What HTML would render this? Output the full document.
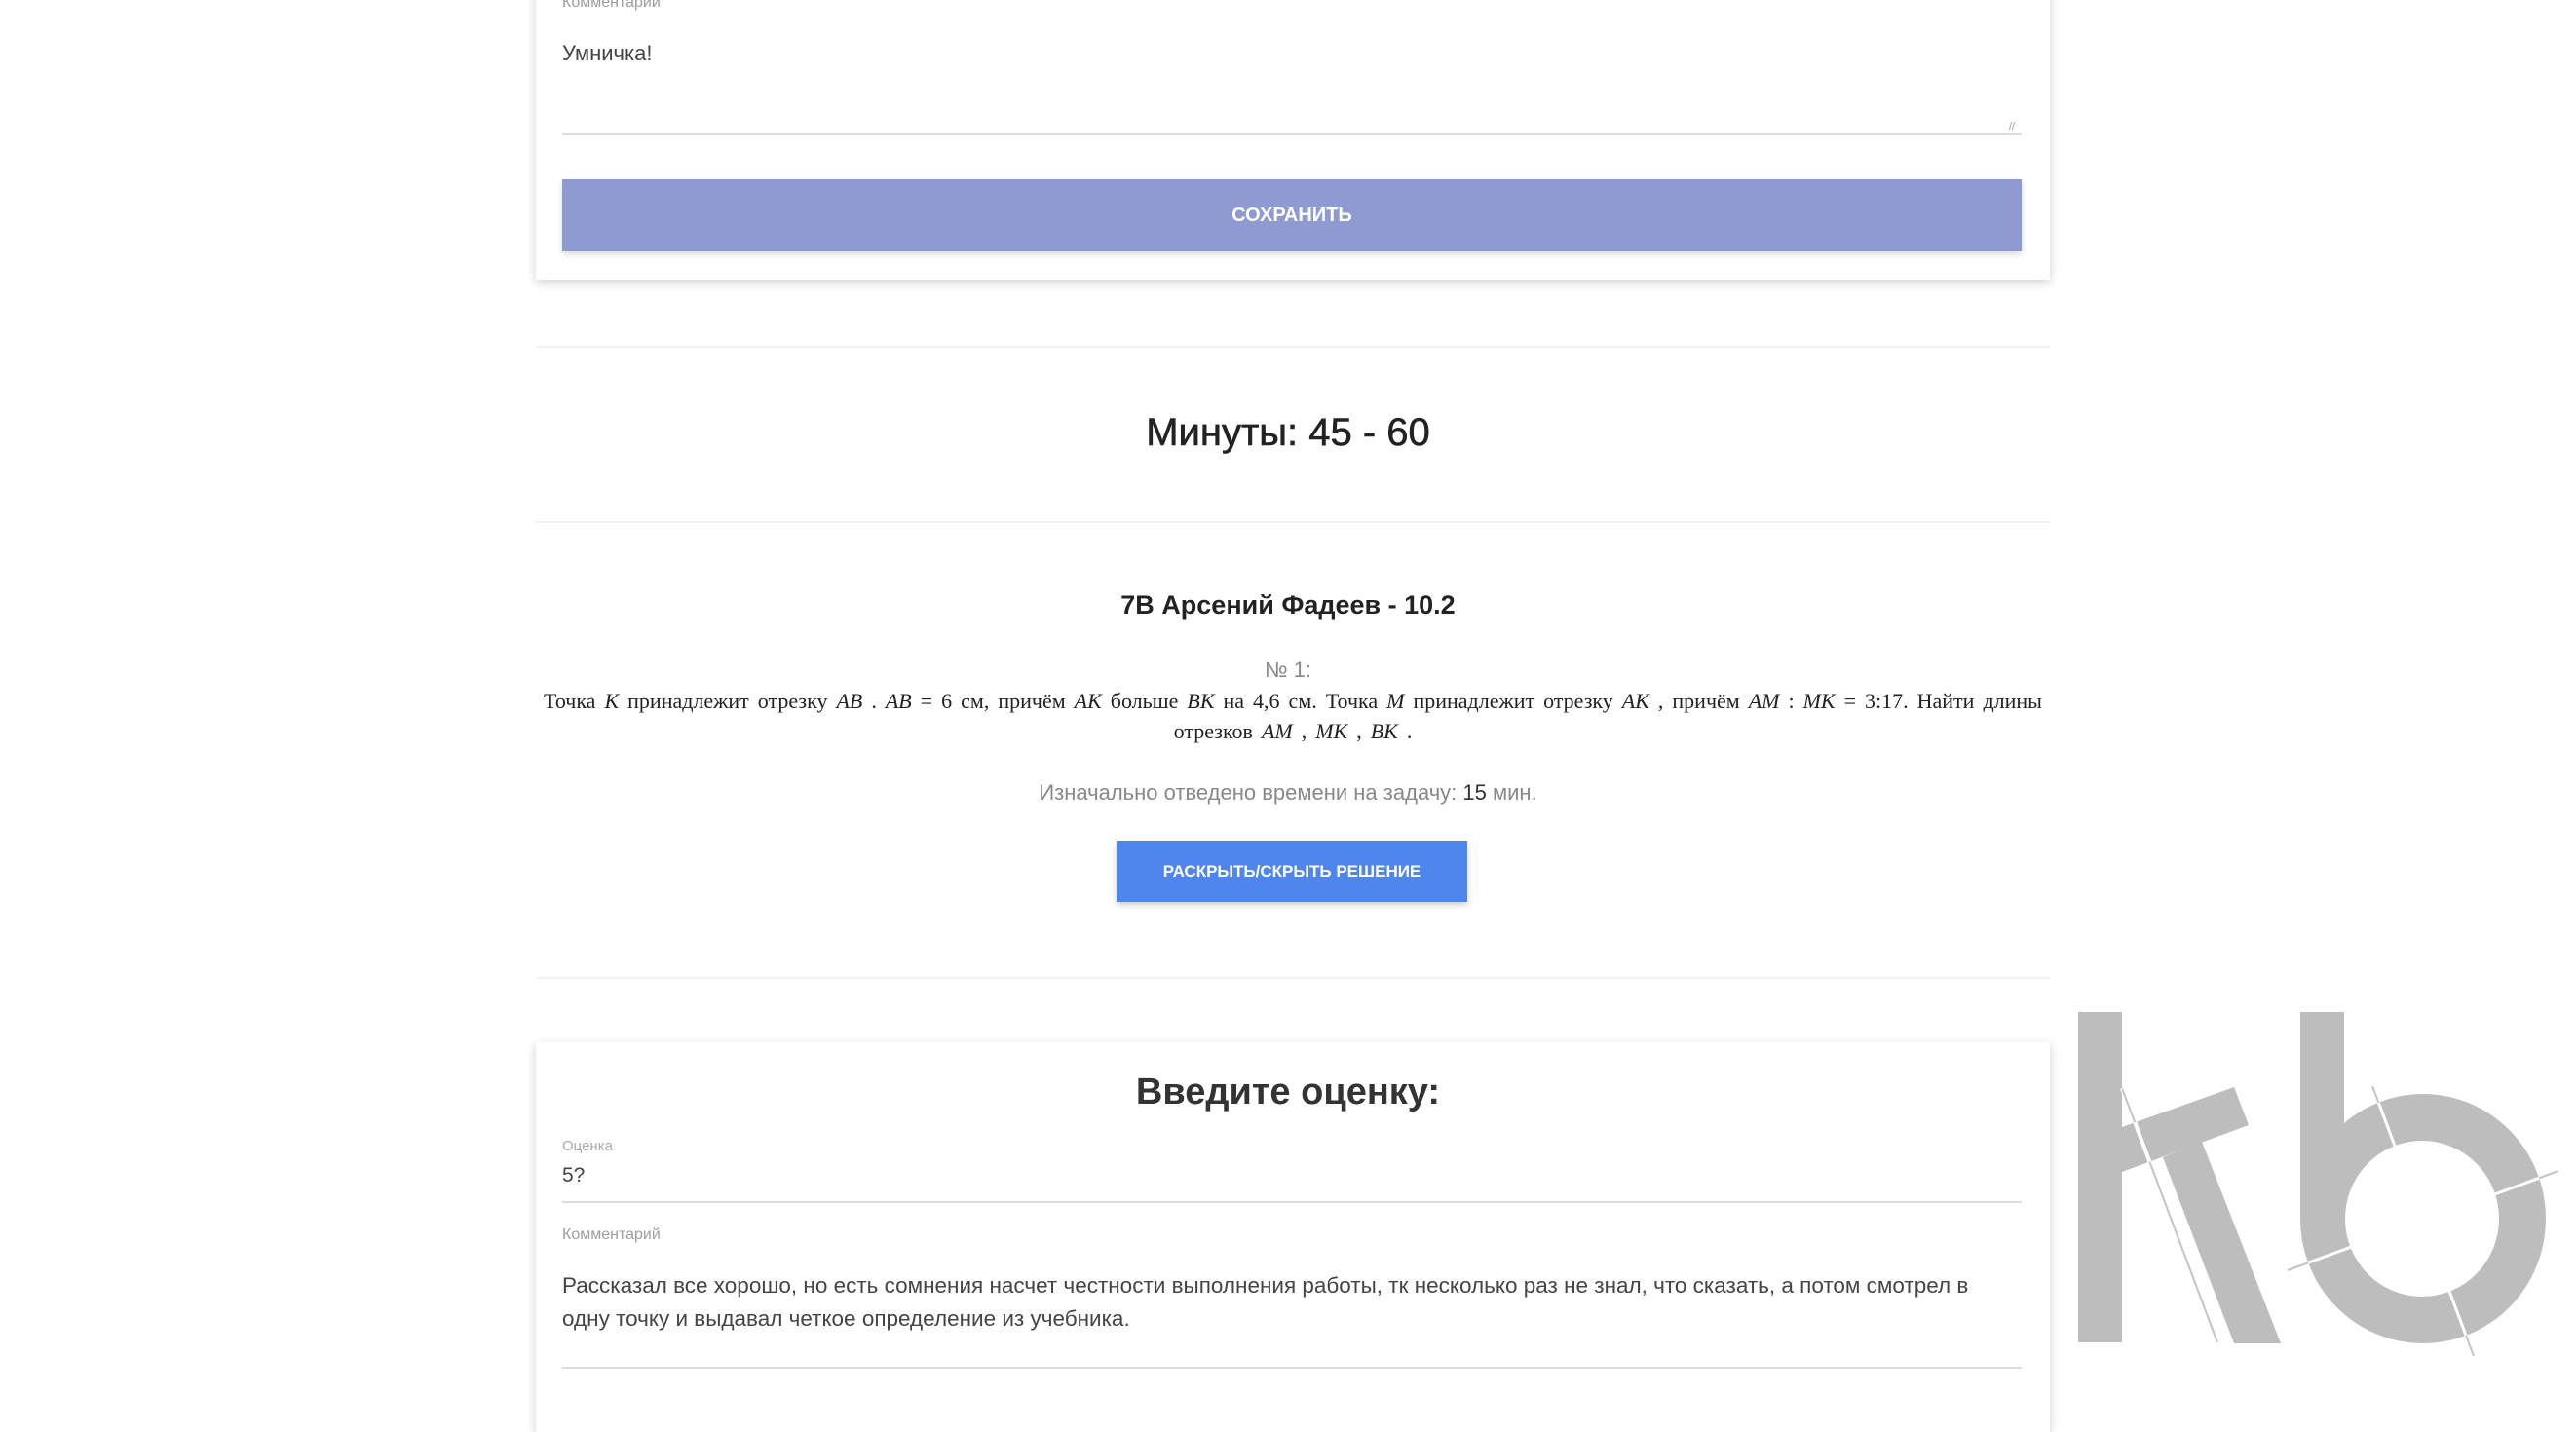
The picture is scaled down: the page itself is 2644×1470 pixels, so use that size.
<!DOCTYPE html>
<html><head><meta charset="utf-8"><style>
*{margin:0;padding:0;box-sizing:border-box}
body{width:2644px;height:1412px;background:#fff;position:relative;overflow:hidden;font-family:"Liberation Sans",sans-serif;color:#333}
.abs{position:absolute}
.card{position:absolute;left:550px;width:1554px;background:#fff;box-shadow:0 3px 10px rgba(0,0,0,.18);}
.c{position:absolute;left:0;width:2644px;text-align:center}
.lbl{position:absolute;left:577px;font-size:16px;color:#9e9e9e}
.line{position:absolute;left:577px;width:1498px;height:2px;background:#dcdcdc}
.div{position:absolute;left:550px;width:1554px;height:2px;background:#f1f1f1}
</style></head><body>
<div class="card" style="top:-20px;height:307px"></div>
<div class="lbl" style="top:-6px">Комментарий</div>
<div class="abs" style="left:577px;top:42px;font-size:22px;color:#444">Умничка!</div>
<div class="line" style="top:137px"></div>
<div class="abs" style="left:2062px;top:124px;font-size:11px;color:#999">//</div>
<div class="abs" style="left:577px;top:184px;width:1498px;height:74px;background:#8f9ad2;box-shadow:0 3px 6px rgba(0,0,0,.15);color:#fff;font-size:20px;font-weight:bold;text-align:center;line-height:74px">СОХРАНИТЬ</div>
<div class="div" style="top:355px"></div>
<div class="c" style="top:422px;font-size:40px;color:#222;-webkit-text-stroke:0.6px #222">Минуты: 45 - 60</div>
<div class="div" style="top:535px"></div>
<div class="c" style="top:606px;font-size:27px;font-weight:bold;color:#222">7В Арсений Фадеев - 10.2</div>
<div class="c" style="top:675px;font-size:22px;color:#888">№ 1:</div>
<div class="abs" style="left:500px;width:1654px;top:704px;text-align:center;font-family:'Liberation Serif',serif;font-size:22px;word-spacing:3.5px;line-height:31px;color:#222;white-space:nowrap">Точка <i>K</i> принадлежит отрезку <i>AB</i> . <i>AB</i> = 6 см, причём <i>AK</i> больше <i>BK</i> на 4,6 см. Точка <i>M</i> принадлежит отрезку <i>AK</i> , причём <i>AM</i> : <i>MK</i> = 3:17. Найти длины<br>отрезков <i>AM</i> , <i>MK</i> , <i>BK</i> .</div>
<div class="c" style="top:801px;font-size:22px;color:#888">Изначально отведено времени на задачу: <span style="color:#333">15</span> мин.</div>
<div class="abs" style="left:1146px;top:863px;width:360px;height:63px;background:#4f86ec;box-shadow:0 3px 6px rgba(0,0,0,.2);color:#fff;font-size:17px;font-weight:bold;text-align:center;line-height:63px">РАСКРЫТЬ/СКРЫТЬ РЕШЕНИЕ</div>
<div class="div" style="top:1003px"></div>
<div class="card" style="top:1070px;height:400px"></div>
<div class="c" style="top:1100px;font-size:38px;font-weight:bold;color:#333">Введите оценку:</div>
<div class="lbl" style="top:1168px;font-size:15px;color:#aaa">Оценка</div>
<div class="abs" style="left:577px;top:1195px;font-size:21px;color:#444">5?</div>
<div class="line" style="top:1233px"></div>
<div class="lbl" style="top:1259px">Комментарий</div>
<div class="abs" style="left:577px;top:1303px;width:1520px;font-size:22.5px;line-height:34px;color:#444;white-space:nowrap">Рассказал все хорошо, но есть сомнения насчет честности выполнения работы, тк несколько раз не знал, что сказать, а потом смотрел в<br>одну точку и выдавал четкое определение из учебника.</div>
<div class="line" style="top:1403px"></div>
<svg class="abs" style="left:0;top:0" width="2644" height="1412">
<defs><clipPath id="cl">
<rect x="2133" y="1039" width="45" height="339"/>
<polygon points="2178,1157 2293,1116 2308,1155 2178,1203"/>
<polygon points="2220,1188 2260,1172 2341,1379 2293,1379"/>
<rect x="2361" y="1039" width="45" height="214"/>
<path fill-rule="evenodd" d="M2361,1251a126,128 0 1,0 252,0a126,128 0 1,0 -252,0ZM2407,1251a79,80 0 1,0 158,0a79,80 0 1,0 -158,0Z"/>
</clipPath></defs>
<line x1="2435" y1="1115" x2="2539" y2="1392" stroke="#c4c4c4" stroke-width="2"/>
<line x1="2348" y1="1304" x2="2626" y2="1202" stroke="#c4c4c4" stroke-width="2"/>
<line x1="2178" y1="1117" x2="2276" y2="1378" stroke="#c4c4c4" stroke-width="2"/>
<g fill="#bdbdbd">
<rect x="2133" y="1039" width="45" height="339"/>
<polygon points="2178,1157 2293,1116 2308,1155 2178,1203"/>
<polygon points="2220,1188 2260,1172 2341,1379 2293,1379"/>
<rect x="2361" y="1039" width="45" height="214"/>
<path fill-rule="evenodd" d="M2361,1251a126,128 0 1,0 252,0a126,128 0 1,0 -252,0ZM2407,1251a79,80 0 1,0 158,0a79,80 0 1,0 -158,0Z"/>
</g>
<g clip-path="url(#cl)" stroke="#fff" stroke-width="3">
<line x1="2435" y1="1115" x2="2539" y2="1392"/>
<line x1="2348" y1="1304" x2="2626" y2="1202"/>
<line x1="2178" y1="1117" x2="2276" y2="1378" stroke-width="4"/>
</g>
</svg>
</body></html>
